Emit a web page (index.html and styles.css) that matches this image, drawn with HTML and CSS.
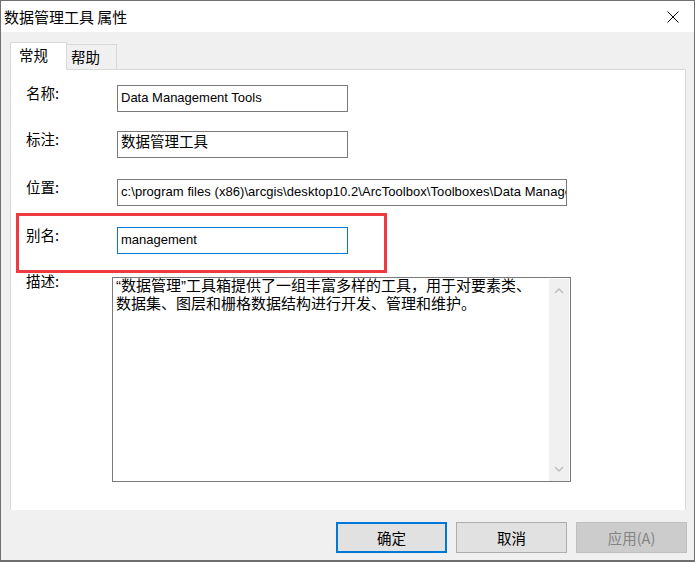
FILE: index.html
```html
<!DOCTYPE html>
<html lang="zh-CN">
<head>
<meta charset="utf-8">
<title>数据管理工具 属性</title>
<link rel="stylesheet" href="styles.css">
</head>
<body>
<div class="window">
  <div class="titlebar">
    <span class="title">数据管理工具 属性</span>
    <svg class="close" width="12" height="12" viewBox="0 0 12 12">
      <path d="M0.5 0.5 L11.5 11.5 M11.5 0.5 L0.5 11.5" stroke="#000" stroke-width="1" fill="none"/>
    </svg>
  </div>
  <div class="content">
    <div class="tabs">
      <div class="tab active">常规</div>
      <div class="tab">帮助</div>
    </div>
    <div class="panel">
      <div class="row row-name">
        <span class="label">名称:</span>
        <div class="field">Data Management Tools</div>
      </div>
      <div class="row row-note">
        <span class="label">标注:</span>
        <div class="field cjk">数据管理工具</div>
      </div>
      <div class="row row-path">
        <span class="label">位置:</span>
        <div class="field wide">c:\program files (x86)\arcgis\desktop10.2\ArcToolbox\Toolboxes\Data Management Tools.tbx</div>
      </div>
      <div class="row row-alias">
        <span class="label">别名:</span>
        <div class="field focused">management</div>
      </div>
      <div class="row row-desc">
        <span class="label label-desc">描述:</span>
        <div class="textarea">
          <div class="textarea-text"><span class="q">“</span>数据管理<span class="q">”</span>工具箱提供了一组丰富多样的工具，用于对要素类、<br>数据集、图层和栅格数据结构进行开发、管理和维护。</div>
          <div class="scrollbar">
            <svg width="10" height="6" viewBox="0 0 10 6"><path d="M1 5 L5 1 L9 5" stroke="#bdbdbd" stroke-width="1.3" fill="none"/></svg>
            <svg width="10" height="6" viewBox="0 0 10 6"><path d="M1 1 L5 5 L9 1" stroke="#bdbdbd" stroke-width="1.3" fill="none"/></svg>
          </div>
        </div>
      </div>
    </div>
    <div class="buttons">
      <button class="btn default">确定</button>
      <button class="btn">取消</button>
      <button class="btn disabled">应用(A)</button>
    </div>
  </div>
  <div class="highlight"></div>
</div>
</body>
</html>
```

FILE: styles.css
```css
html, body {
  margin: 0;
  padding: 0;
  background: #6f6f6f;
}

.window {
  position: relative;
  box-sizing: border-box;
  width: 695px;
  height: 561px;
  border: 1px solid #707070;
  background: #f0f0f0;
  font-family: "Noto Sans CJK SC", "Liberation Sans", sans-serif;
  color: #000;
  overflow: hidden;
}

/* title bar */
.titlebar {
  height: 31px;
  background: #fff;
  display: flex;
  align-items: center;
  padding-left: 3px;
}

.title {
  font-size: 15px;
  line-height: 20px;
}

.close {
  margin-left: auto;
  margin-right: 15px;
}

/* dialog body */
.content {
  padding: 10px 8px 0 9px;
}

.tabs {
  display: flex;
  align-items: flex-end;
  height: 27px;
}

.tab {
  box-sizing: border-box;
  width: 50px;
  height: 25px;
  padding-left: 4px;
  border: 1px solid #d9d9d9;
  border-left: none;
  border-bottom: none;
  background: #f0f0f0;
  font-size: 14.5px;
  line-height: 23px;
}

.tab.active {
  position: relative;
  z-index: 1;
  width: 57px;
  height: 28px;
  margin-bottom: -1px;
  padding-left: 8px;
  border-left: 1px solid #d9d9d9;
  background: #fff;
  line-height: 24px;
}

.panel {
  box-sizing: border-box;
  width: 676px;
  height: 441px;
  background: #fff;
  border: 1px solid #d9d9d9;
  border-bottom: none;
  padding: 15px 0 0 15px;
}

.row {
  display: flex;
  align-items: flex-start;
}

.row-note { margin-top: 19px; }
.row-path { margin-top: 21px; }
.row-alias { margin-top: 21px; }
.row-desc { margin-top: 23px; }

.label {
  width: 91px;
  flex: none;
  font-size: 14.5px;
  line-height: 15px;
}

.label-desc {
  margin-top: -4px;
}

.field {
  box-sizing: border-box;
  width: 231px;
  height: 27px;
  border: 1px solid #7a7a7a;
  padding: 0 3px;
  font-family: "Liberation Sans", "Noto Sans CJK SC", sans-serif;
  font-size: 13px;
  line-height: 23px;
  white-space: nowrap;
  overflow: hidden;
}

.field.cjk {
  font-family: "Noto Sans CJK SC", sans-serif;
  font-size: 14.5px;
  line-height: 17px;
}

.field.wide {
  width: 450px;
  letter-spacing: 0.06px;
}

.field.focused {
  border-color: #0078d7;
}

/* multi-line description box */
.textarea {
  box-sizing: border-box;
  width: 459px;
  height: 205px;
  margin-left: -5px;
  border: 1px solid #7a7a7a;
  display: flex;
}

.textarea-text {
  flex: 1;
  padding-left: 3px;
  margin-top: -2px;
  font-size: 15px;
  line-height: 17px;
  white-space: nowrap;
}

.q {
  font-family: "Liberation Sans", sans-serif;
}

.scrollbar {
  width: 20px;
  margin: 1px 1px 0 0;
  background: #f0f0f0;
  display: flex;
  flex-direction: column;
  align-items: center;
  justify-content: space-between;
  padding: 9px 0 9px;
  box-sizing: border-box;
}

/* bottom buttons */
.buttons {
  display: flex;
  justify-content: flex-end;
  gap: 9px;
  margin-top: 12px;
  margin-right: -1px;
}

.btn {
  box-sizing: border-box;
  width: 111px;
  height: 31px;
  padding: 0;
  border: 1px solid #adadad;
  background: #e1e1e1;
  font-family: "Noto Sans CJK SC", sans-serif;
  font-size: 14.5px;
  color: #000;
}

.btn.default {
  border: 2px solid #0078d7;
}

.btn.disabled {
  background: #cccccc;
  border-color: #bfbfbf;
  color: #838383;
}

/* red callout frame around the alias row */
.highlight {
  position: absolute;
  left: 15px;
  top: 212px;
  width: 371px;
  height: 60px;
  box-sizing: border-box;
  border: 3px solid #ef3a3f;
  pointer-events: none;
}
```
